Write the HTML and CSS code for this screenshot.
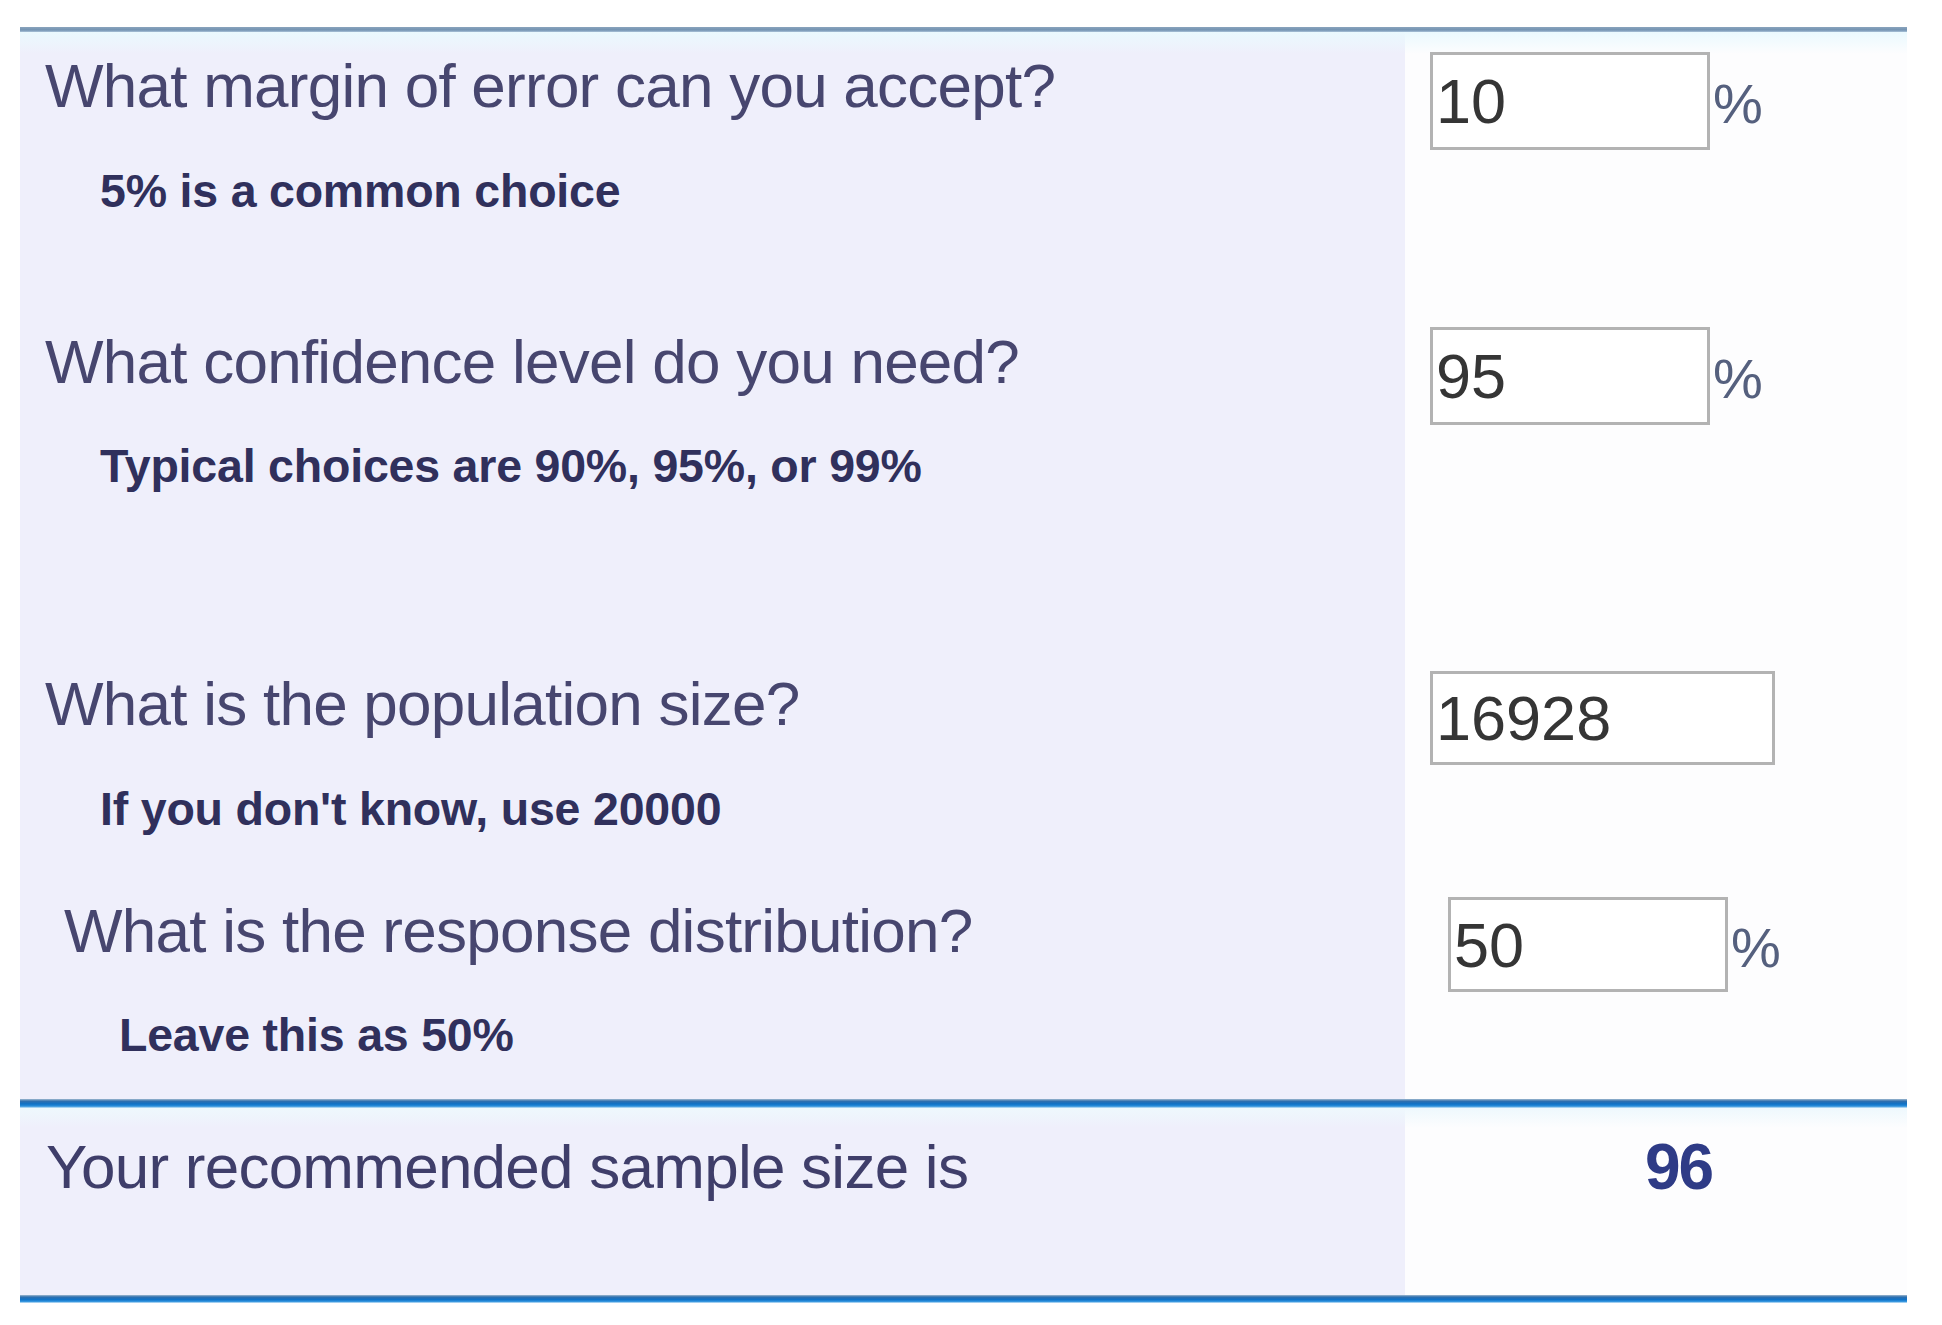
FILE: index.html
```html
<!DOCTYPE html>
<html lang="en">
<head>
<meta charset="utf-8">
<title>Sample size calculator</title>
<link rel="stylesheet" href="styles.css">
</head>
<body>
<div class="panel">
  <div class="rule-top"></div>

  <div class="row row-a">
    <div class="q">
      <div class="head">What margin of error can you accept?</div>
      <div class="sub">5% is a common choice</div>
    </div>
    <div class="a">
      <div class="field"><input class="box" type="text" value="10"><span class="pct">%</span></div>
    </div>
  </div>

  <div class="row row-b">
    <div class="q">
      <div class="head">What confidence level do you need?</div>
      <div class="sub">Typical choices are 90%, 95%, or 99%</div>
    </div>
    <div class="a">
      <div class="field"><input class="box" type="text" value="95"><span class="pct">%</span></div>
    </div>
  </div>

  <div class="row row-c">
    <div class="q">
      <div class="head">What is the population size?</div>
      <div class="sub">If you don't know, use 20000</div>
    </div>
    <div class="a">
      <div class="field"><input class="box box-wide" type="text" value="16928"></div>
    </div>
  </div>

  <div class="row row-d">
    <div class="q q-shift">
      <div class="head">What is the response distribution?</div>
      <div class="sub">Leave this as 50%</div>
    </div>
    <div class="a a-shift">
      <div class="field"><input class="box" type="text" value="50"><span class="pct">%</span></div>
    </div>
  </div>

  <div class="rule-blue"></div>

  <div class="row row-e">
    <div class="q">
      <div class="head result">Your recommended sample size is</div>
    </div>
    <div class="a">
      <div class="answer">96</div>
    </div>
  </div>

  <div class="rule-blue rule-bottom"></div>
</div>
</body>
</html>
```

FILE: styles.css
```css
html, body {
  margin: 0;
  padding: 0;
  background: #ffffff;
}

body {
  font-family: "Liberation Sans", Arial, sans-serif;
}

.panel {
  margin: 27px 0 0 20px;
  width: 1887px;
}

.rule-top {
  height: 5px;
  background: linear-gradient(#8aa4bd, #7393b2 60%, #a9c2d8);
}

.row {
  display: grid;
  grid-template-columns: 1385px 1fr;
}

.q {
  background: #efeffb;
  padding-left: 25px;
}

.a {
  background: #fdfdfe;
  padding-left: 25px;
}

.row-a .q, .row-a .a {
  background-image: linear-gradient(#eaf9fe, rgba(255,255,255,0) 22px);
}

.row-a { height: 268px; }
.row-a .q { padding-top: 23px; }
.row-a .a { padding-top: 20px; }

.row-b { height: 350px; }
.row-b .q { padding-top: 31px; }
.row-b .a { padding-top: 27px; }

.row-c { height: 230px; }
.row-c .q { padding-top: 23px; }
.row-c .a { padding-top: 21px; }

.row-d { height: 219px; }
.row-d .q { padding-top: 20px; }
.row-d .a { padding-top: 17px; }

.q-shift { padding-left: 44px; }
.a-shift { padding-left: 43px; }

.head {
  font-size: 62px;
  line-height: 62px;
  color: #47466f;
  letter-spacing: -0.75px;
  white-space: nowrap;
}

.sub {
  font-size: 46.5px;
  line-height: 44px;
  font-weight: bold;
  color: #30305c;
  letter-spacing: -0.2px;
  margin-top: 52px;
  margin-left: 55px;
  white-space: nowrap;
}

.row-b .sub { margin-top: 51px; }
.row-d .sub { margin-top: 51px; }

.field {
  display: flex;
  align-items: baseline;
}

.box {
  box-sizing: border-box;
  width: 280px;
  height: 98px;
  margin: 0;
  padding: 0 3px;
  border: 3px solid #b3b3b3;
  border-radius: 0;
  background: #ffffff;
  font-family: "Liberation Sans", Arial, sans-serif;
  font-size: 63px;
  color: #353535;
  outline: none;
}

.box-wide {
  width: 345px;
  height: 94px;
}

.row-d .box { height: 95px; }

.pct {
  font-size: 56px;
  color: #55607e;
  margin-left: 3px;
}

.rule-blue {
  height: 9px;
  background: linear-gradient(#9fb9cf, #2f6fae 25%, #0f71c6 55%, #2b8fdc 80%, #d4eaf8);
}

.row-e { height: 187px; }
.row-e .q, .row-e .a {
  padding-top: 28px;
  background-image: linear-gradient(#eef8fd, rgba(255,255,255,0) 20px);
}
.row-e .q { padding-left: 26px; }
.row-e .a { padding-left: 240px; }

.result {
  color: #3f3e6a;
}

.answer {
  font-size: 64px;
  line-height: 62px;
  font-weight: bold;
  color: #2e3b86;
  letter-spacing: -2px;
}

.rule-bottom {
  height: 8px;
}
```
